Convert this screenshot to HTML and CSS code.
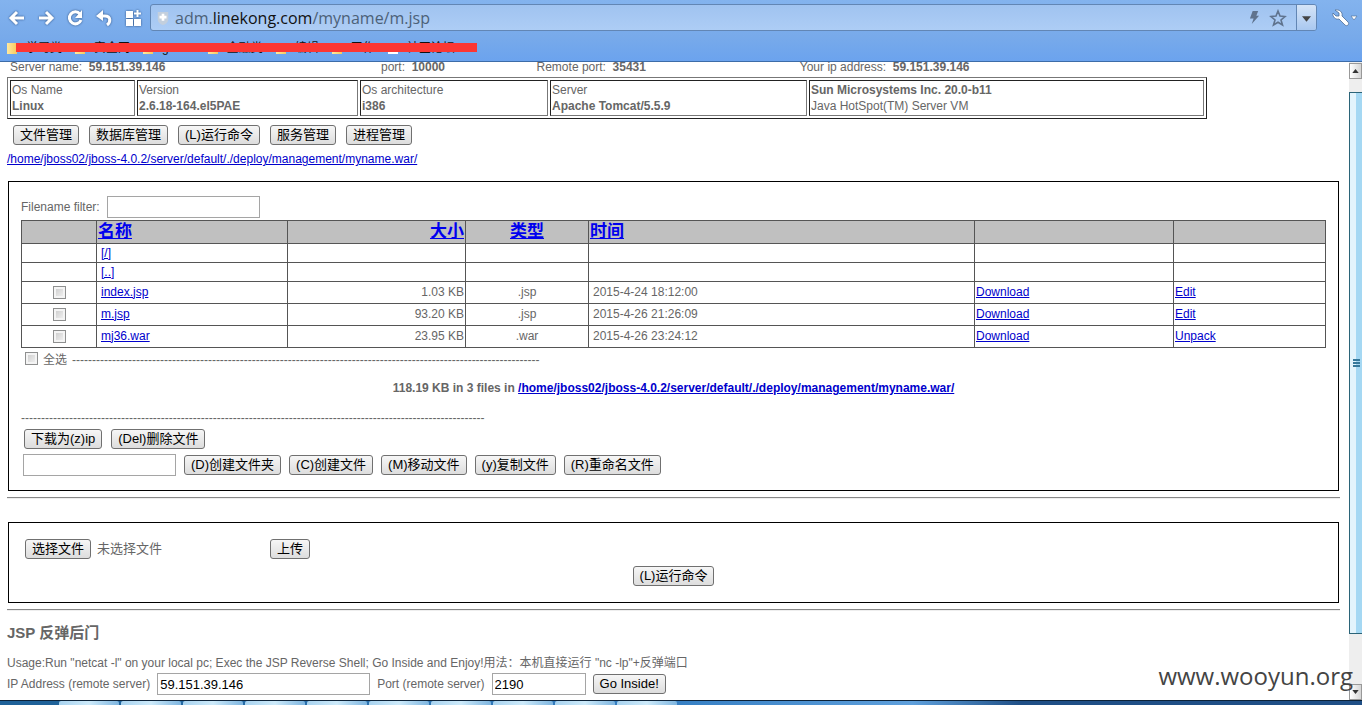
FILE: index.html
```
<!DOCTYPE html>
<html lang="zh-CN">
<head>
    <meta charset="UTF-8">
    <meta name="viewport" content="width=device-width, initial-scale=1">
    <title>m.jsp</title>
    <link rel="stylesheet" href="styles.css">
</head>
<body>

    <!-- browser toolbar -->
    <header class="browser">
        <div class="toolbar">
            <button class="nav" type="button" aria-label="Back"><svg viewBox="0 0 18 18"><path d="M16 9H3M9 3L3 9l6 6" /></svg></button>
            <button class="nav" type="button" aria-label="Forward"><svg viewBox="0 0 18 18"><path d="M2 9h13M9 3l6 6-6 6" /></svg></button>
            <button class="nav" type="button" aria-label="Reload"><svg viewBox="0 0 18 18"><path d="M14 5a6 6 0 1 0 1 6" /><path class="solid" d="M16 1v8H9z" /></svg></button>
            <button class="nav" type="button" aria-label="Undo"><svg viewBox="0 0 18 18"><path d="M5 7h5c6 0 6 6 2 9" /><path class="solid" d="M8 1v11L1 7z" /></svg></button>
            <button class="nav" type="button" aria-label="Apps"><svg viewBox="0 0 18 18"><path class="solid" d="M2 2h7v7H2zM2 10h7v7H2zM10 10h7v7h-7z" /><path class="thin" d="M13.500 1v7M10 4.500h7" /></svg></button>
            <div class="address">
                <svg class="shield" viewBox="0 0 16 18"><path d="M2 2h12v8c0 4-3 6-6 7-3-1-6-3-6-7z" fill="#c3cfdd" /><path d="M8 4v8M4 8h8" stroke="#fff" stroke-width="3" /></svg>
                <div class="url">adm.<b>linekong.com</b>/myname/m.jsp</div>
                <svg class="bolt" viewBox="0 0 12 16"><path d="M4 1h6L8 6h3L3 15l2-6H1z" fill="#5f738e" /></svg>
                <svg class="star" viewBox="0 0 18 18"><path d="M9 2l2 5 5 .5-4 3.500 1.500 5L9 13.200 4.500 16 6 11 2 7.500 7 7z" fill="none" stroke="#5f738e" stroke-width="1.600" /></svg>
                <button class="drop" type="button" aria-label="History"><svg viewBox="0 0 10 6"><path d="M0 0h10L5 6z" fill="#444" /></svg></button>
            </div>
            <button class="wrench" type="button" aria-label="Tools"><svg viewBox="0 0 26 18"><path d="M3 1l4 3v3H4L1 4c-1 4 3 7 6 6l6 6c2 2 5-1 3-3l-6-6c1-4-3-7-7-6z" fill="#fff" stroke="#4c6c96" stroke-width=".8" /><path d="M19 7h6l-3 4z" fill="#fff" stroke="#4c6c96" stroke-width=".6" /></svg></button>
        </div>
        <div class="bookmarks">
            <a href="#"><i class="folder"></i>学习类</a>
            <a href="#"><i class="folder"></i>安全网</a>
            <a href="#"><i class="folder"></i>github</a>
            <a href="#"><i class="folder"></i>金融类</a>
            <a href="#"><i class="folder"></i>编辑</a>
            <a href="#"><i class="folder"></i>工作</a>
            <a href="#"><i class="folder sheet"></i>社区论坛</a>
            <div class="strike"></div>
        </div>
    </header>

    <div class="viewport">
        <main class="page">

            <div class="server">
                <div>Server name:&nbsp; <b>59.151.39.146</b></div>
                <div>port:&nbsp; <b>10000</b></div>
                <div>Remote port:&nbsp; <b>35431</b></div>
                <div>Your ip address:&nbsp; <b>59.151.39.146</b></div>
            </div>

            <table class="info">
                <tr>
                    <td class="c1">Os Name<br><b>Linux</b></td>
                    <td class="c2">Version<br><b>2.6.18-164.el5PAE</b></td>
                    <td class="c3">Os architecture<br><b>i386</b></td>
                    <td class="c4">Server<br><b>Apache Tomcat/5.5.9</b></td>
                    <td><b>Sun Microsystems Inc. 20.0-b11</b><br>Java HotSpot(TM) Server VM</td>
                </tr>
            </table>

            <div class="row menu">
                <button class="btn" type="button">文件管理</button>
                <button class="btn" type="button">数据库管理</button>
                <button class="btn" type="button">(L)运行命令</button>
                <button class="btn" type="button">服务管理</button>
                <button class="btn" type="button">进程管理</button>
            </div>

            <div class="path"><a href="#">/home/jboss02/jboss-4.0.2/server/default/./deploy/management/myname.war/</a></div>

            <!-- file list -->
            <section class="box files">
                <div class="filter">
                    <label for="filter">Filename filter:</label>
                    <input class="text" id="filter" type="text">
                </div>

                <table class="list">
                    <colgroup>
                        <col class="w-check"><col class="w-name"><col class="w-size"><col class="w-type"><col class="w-time"><col class="w-down"><col>
                    </colgroup>
                    <tr class="head">
                        <th></th>
                        <th><a href="#">名称</a></th>
                        <th class="right"><a href="#">大小</a></th>
                        <th class="center"><a href="#">类型</a></th>
                        <th><a href="#">时间</a></th>
                        <th></th>
                        <th></th>
                    </tr>
                    <tr class="dir">
                        <td></td>
                        <td class="name"><a href="#">[/]</a></td>
                        <td></td><td></td><td></td><td></td><td></td>
                    </tr>
                    <tr class="dir">
                        <td></td>
                        <td class="name"><a href="#">[..]</a></td>
                        <td></td><td></td><td></td><td></td><td></td>
                    </tr>
                    <tr>
                        <td class="center"><input type="checkbox" aria-label="index.jsp"></td>
                        <td class="name"><a href="#">index.jsp</a></td>
                        <td class="right">1.03 KB</td>
                        <td class="center">.jsp</td>
                        <td class="name">2015-4-24 18:12:00</td>
                        <td><a href="#">Download</a></td>
                        <td><a href="#">Edit</a></td>
                    </tr>
                    <tr>
                        <td class="center"><input type="checkbox" aria-label="m.jsp"></td>
                        <td class="name"><a href="#">m.jsp</a></td>
                        <td class="right">93.20 KB</td>
                        <td class="center">.jsp</td>
                        <td class="name">2015-4-26 21:26:09</td>
                        <td><a href="#">Download</a></td>
                        <td><a href="#">Edit</a></td>
                    </tr>
                    <tr>
                        <td class="center"><input type="checkbox" aria-label="mj36.war"></td>
                        <td class="name"><a href="#">mj36.war</a></td>
                        <td class="right">23.95 KB</td>
                        <td class="center">.war</td>
                        <td class="name">2015-4-26 23:24:12</td>
                        <td><a href="#">Download</a></td>
                        <td><a href="#">Unpack</a></td>
                    </tr>
                </table>

                <div class="all">
                    <input type="checkbox" id="all">
                    <label for="all">全选</label>
                    <span>---------------------------------------------------------------------------------------------------------------------</span>
                </div>

                <div class="total">118.19 KB in 3 files in <a href="#">/home/jboss02/jboss-4.0.2/server/default/./deploy/management/myname.war/</a></div>

                <div class="dashes">--------------------------------------------------------------------------------------------------------------------</div>

                <div class="row zip">
                    <button class="btn" type="button">下载为(z)ip</button>
                    <button class="btn" type="button">(Del)删除文件</button>
                </div>
                <div class="row make">
                    <input class="text" type="text" aria-label="Name">
                    <button class="btn" type="button">(D)创建文件夹</button>
                    <button class="btn" type="button">(C)创建文件</button>
                    <button class="btn" type="button">(M)移动文件</button>
                    <button class="btn" type="button">(y)复制文件</button>
                    <button class="btn" type="button">(R)重命名文件</button>
                </div>
            </section>

            <hr>

            <section class="box upload">
                <div class="row">
                    <div class="pick">
                        <button class="btn" type="button">选择文件</button>
                        <span>未选择文件</span>
                    </div>
                    <button class="btn" type="button">上传</button>
                </div>
                <div class="run"><button class="btn" type="button">(L)运行命令</button></div>
            </section>

            <hr>

            <h3>JSP 反弹后门</h3>
            <p class="usage">Usage:Run "netcat -l" on your local pc; Exec the JSP Reverse Shell; Go Inside and Enjoy!用法：本机直接运行 "nc -lp"+反弹端口</p>
            <form class="remote">
                <label for="ip">IP Address (remote server)</label>
                <input class="text ip" id="ip" type="text" value="59.151.39.146">
                <label for="port">Port (remote server)</label>
                <input class="text port" id="port" type="text" value="2190">
                <button class="btn" type="button">Go Inside!</button>
            </form>
        </main>

        <div class="scrollbar">
            <div class="arrow"><svg viewBox="0 0 8 5"><path d="M0 5h8L4 0z" fill="#333" /></svg></div>
            <div class="track"><div class="thumb"><i></i><i></i><i></i></div></div>
            <div class="arrow"><svg viewBox="0 0 8 5"><path d="M0 0h8L4 5z" fill="#333" /></svg></div>
        </div>
        <div class="watermark">www.wooyun.org</div>
    </div>

    <!-- top edge of the taskbar -->
    <footer class="taskbar">
        <i></i><i></i><i></i><i></i><i></i><i></i><i></i><i></i><i></i><i></i>
    </footer>

</body>
</html>
```

FILE: styles.css
```
* {
    box-sizing: border-box;
}

body {
    margin: 0;
    height: 100vh;
    overflow: hidden;
    display: flex;
    flex-direction: column;
    background: #fff;
    color: #666;
    font-family: "Liberation Sans", Arial, "Noto Sans CJK SC", sans-serif;
    font-size: 12px;
    line-height: 16px;
}

a {
    color: #00c;
}

/* browser toolbar */
.browser {
    flex: none;
    height: 62px;
    background: linear-gradient(#83b3ee, #78aaea 60%, #6ba3ee);
    border-bottom: 1px solid #3d6ca8;
}

.toolbar {
    display: flex;
    align-items: center;
    height: 35px;
    padding: 0 4px 0 8px;
}

.nav {
    width: 18px;
    height: 18px;
    margin-right: 11px;
    padding: 0;
    border: 0;
    background: none;
}

.nav svg {
    display: block;
    width: 18px;
    height: 18px;
    overflow: visible;
    fill: none;
    stroke: #fff;
    stroke-width: 3;
    filter: drop-shadow(0 0 1px #2c4f80);
}

.nav .solid {
    fill: #fff;
    stroke: none;
}

.nav .thin {
    stroke-width: 2;
}

.address {
    flex: 1;
    display: flex;
    align-items: center;
    height: 27px;
    margin: 0 15px 0 -3px;
    padding-left: 5px;
    border: 1px solid #6286b4;
    border-radius: 3px;
    background: linear-gradient(#a0c3f0, #adcdf5);
}

.shield {
    width: 14px;
    height: 16px;
}

.url {
    flex: 1;
    margin-left: 5px;
    color: #4c6178;
    font-family: "Open Sans", "Noto Sans", sans-serif;
    font-size: 16px;
    line-height: 24px;
}

.url b {
    color: #111;
    font-weight: normal;
}

.bolt {
    width: 11px;
    height: 15px;
    margin-right: 9px;
}

.star {
    width: 18px;
    height: 18px;
    margin-right: 9px;
}

.drop {
    width: 20px;
    height: 25px;
    padding: 0;
    border: 0;
    border-left: 1px solid #6286b4;
    border-radius: 0 2px 2px 0;
    background: linear-gradient(#d5e4f7, #a9c8f0);
}

.drop svg {
    width: 9px;
    height: 6px;
}

.wrench {
    width: 26px;
    height: 20px;
    padding: 0;
    border: 0;
    background: none;
}

.wrench svg {
    display: block;
    width: 26px;
    height: 18px;
}

.bookmarks {
    position: relative;
    display: flex;
    gap: 13px;
    height: 24px;
    padding: 4px 0 0 7px;
}

.bookmarks a {
    display: flex;
    align-items: center;
    height: 18px;
    color: #111;
    text-decoration: none;
}

.folder {
    width: 10px;
    height: 11px;
    margin-right: 9px;
    background: linear-gradient(90deg, #ffe9a0, #f7c95c);
}

.sheet {
    background: #fff;
}

.strike {
    position: absolute;
    left: 16px;
    top: 8px;
    width: 461px;
    height: 9px;
    background: #fc3633;
}

/* page */
.viewport {
    position: relative;
    flex: 1;
    min-height: 0;
    display: flex;
    overflow: hidden;
}

.page {
    flex: 1;
    padding: 0 9px 0 7px;
}

.server {
    display: grid;
    grid-template-columns: 31% 13% 22% 1fr;
    width: 90%;
    height: 15px;
    padding-left: 3px;
    line-height: 10px;
}

.info {
    width: 90%;
    border: 1px solid;
    border-color: #777 #222 #222 #777;
    border-spacing: 2px;
    table-layout: fixed;
}

.info td {
    padding: 1px;
    border: 1px solid;
    border-color: #222 #777 #777 #222;
}

.c1 {
    width: 125px;
}

.c2 {
    width: 221px;
}

.c3 {
    width: 188px;
}

.c4 {
    width: 257px;
}

.row {
    display: flex;
    align-items: center;
    gap: 9px;
}

.btn {
    height: 20px;
    padding: 0 6px;
    border: 1px solid #707070;
    border-radius: 3px;
    background: linear-gradient(#f6f6f6, #ddd);
    color: #000;
    font-family: inherit;
    font-size: 13px;
    line-height: 18px;
    white-space: nowrap;
}

.text {
    width: 153px;
    height: 22px;
    padding: 0 2px;
    border: 1px solid #a5a5a5;
    background: #fff;
    color: #000;
    font-family: inherit;
    font-size: 13px;
}

input[type="checkbox"] {
    appearance: none;
    display: inline-block;
    width: 13px;
    height: 13px;
    margin: 0;
    border: 1px solid #8e8f8f;
    background: linear-gradient(135deg, #c8c8c8, #f6f6f6);
    box-shadow: inset 0 0 0 2px #f4f4f4;
    vertical-align: middle;
}

.menu {
    gap: 10px;
    margin: 6px 6px;
}

.path {
    margin-bottom: 14px;
}

.box {
    margin: 0 1px;
    border: 1px solid #000;
}

.files {
    padding: 14px 12px;
}

.filter {
    display: flex;
    align-items: center;
    gap: 7px;
    margin-bottom: 2px;
}

.list {
    width: 100%;
    border-collapse: collapse;
    table-layout: fixed;
}

.list th,
.list td {
    height: 22px;
    padding: 0 1px 2px;
    border: 1px solid #555;
    text-align: left;
}

.list .head th {
    height: 23px;
    padding-bottom: 0;
    background: #c0c0c0;
    font-size: 17px;
    line-height: 22px;
}

.head a {
    color: #00e;
}

.list .dir td {
    height: 19px;
    padding-bottom: 0;
}

.list .name {
    padding-left: 4px;
}

.list .right {
    text-align: right;
}

.list .center {
    text-align: center;
}

.w-check {
    width: 75px;
}

.w-name {
    width: 191px;
}

.w-size {
    width: 178px;
}

.w-type {
    width: 123px;
}

.w-time {
    width: 386px;
}

.w-down {
    width: 199px;
}

.all {
    display: flex;
    gap: 5px;
    margin: 4px 4px 12px;
    white-space: nowrap;
}

.total {
    font-weight: bold;
    text-align: center;
    margin-bottom: 14px;
}

.dashes {
    margin-bottom: 3px;
}

.zip {
    margin: 0 3px 5px;
}

.make {
    gap: 8px;
    margin-left: 2px;
}

hr {
    height: 2px;
    margin: 6px 0 23px;
    border: 0;
    border-top: 1px solid #888;
    border-bottom: 1px solid #eee;
}

.upload {
    padding: 16px;
}

.upload .row {
    gap: 0;
}

.pick {
    display: flex;
    align-items: center;
    gap: 6px;
    width: 245px;
    font-size: 13px;
}

.run {
    display: flex;
    justify-content: center;
    margin-top: 7px;
}

.upload + hr {
    margin-bottom: 14px;
}

h3 {
    margin: 0 0 14px;
    font-size: 15px;
    line-height: 16px;
}

.usage {
    margin: 0 0 2px;
}

.remote {
    display: flex;
    align-items: center;
    gap: 7px;
}

.ip {
    width: 213px;
}

.port {
    width: 94px;
}

/* page scrollbar */
.scrollbar {
    flex: none;
    display: flex;
    flex-direction: column;
    width: 13px;
    padding-top: 1px;
    background: #eee;
}

.arrow {
    display: flex;
    align-items: center;
    justify-content: center;
    height: 16px;
    border: 1px solid #999;
    background: linear-gradient(90deg, #fff, #d5d5d5);
}

.arrow svg {
    width: 7px;
    height: 4px;
}

.track {
    flex: 1;
    padding: 13px 0 50px;
}

.thumb {
    display: flex;
    flex-direction: column;
    align-items: center;
    justify-content: center;
    gap: 1px;
    height: 100%;
    border: 1px solid #2b6478;
    border-right: 0;
    background: linear-gradient(90deg, #e3f4fc 50%, #a5d8f3 50%);
}

.thumb i {
    width: 7px;
    height: 2px;
    background: #37799b;
}

.watermark {
    position: absolute;
    right: 9px;
    bottom: 6px;
    color: #444;
    font-family: "Open Sans", "Noto Sans", sans-serif;
    font-size: 24px;
    line-height: 36px;
}

.taskbar {
    flex: none;
    display: flex;
    gap: 2px;
    height: 5px;
    padding-left: 59px;
    border-top: 1px solid #0c2238;
    background: linear-gradient(90deg, #1f6299 4%, #3780c4 50%, #5fa0dc 67%, #1f4f86 75%, #1f4f86);
}

.taskbar i {
    width: 60px;
    border-radius: 2px 2px 0 0;
    background: linear-gradient(90deg, #a9d3ef, #cdeafa 50%, #7fb6e0);
}
```
